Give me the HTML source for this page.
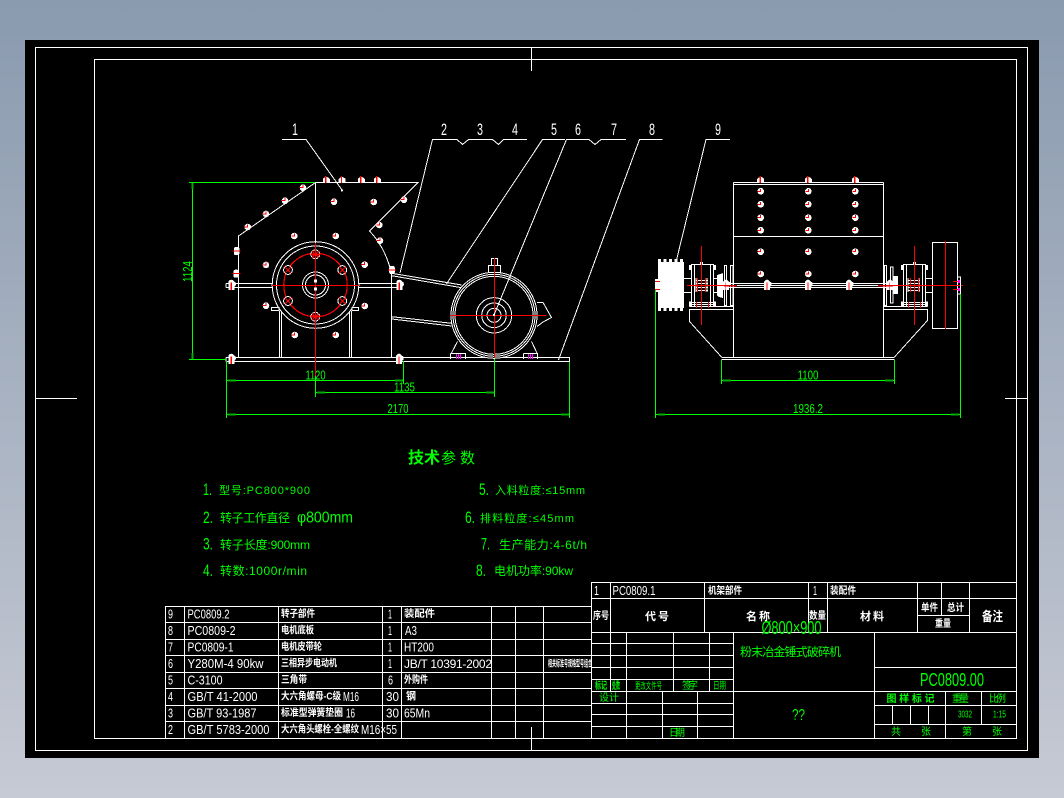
<!DOCTYPE html>
<html><head><meta charset="utf-8"><title>PC0809.00</title>
<style>
html,body{margin:0;padding:0;width:1064px;height:798px;overflow:hidden;background:linear-gradient(#8a9aaf,#c6cad4)}
svg{position:absolute;left:0;top:0;display:block}
.w{stroke:#fff;fill:none;stroke-width:1}
.r{stroke:#f00;fill:none;stroke-width:1}
.g{stroke:#0f0;fill:none;stroke-width:1}
.m{stroke:#f0f;fill:none;stroke-width:1}
g.cr *{shape-rendering:crispEdges}
text{font-family:"Liberation Sans","WenQuanYi Zen Hei","Noto Sans CJK SC",sans-serif}
.tw{fill:#fff;font-size:13px}
.tc{fill:#fff;font-size:10px;font-weight:700}
.tg{fill:#0f0;font-size:13px}
.cg{fill:#0f0;font-size:10px}
</style></head><body>
<svg width="1064" height="798" viewBox="0 0 1064 798" xmlns="http://www.w3.org/2000/svg">
<defs>
<g id="b"><circle r="3.3" fill="#fff"/><path d="M-3 0H0M0 -2.5V0.5" stroke="#f00" stroke-width="1"/></g>
<g id="tp"><path d="M-3.5 3V-1Q0 -5 3.5 -1V3Z" fill="#fff"/><path d="M-0.5 -4V3" stroke="#f00" stroke-width="1.2"/></g>
<g id="sd"><rect x="-2.8" y="-4" width="5.6" height="8" rx="2" fill="#fff"/><path d="M-4 0H4" stroke="#f00"/></g>
<g id="tl"><path d="M-3 5.5V-3Q0 -7 3 -3V5.5Z" fill="#fff"/><rect x="-0.5" y="-3" width="5" height="5" rx="2" fill="#fff"/><path d="M0 -2V5.5" stroke="#f00" stroke-width="1.4"/></g>
<g id="rg"><circle r="4.4" fill="#000" stroke="#fff"/><path d="M-3.5 -3.5L3.5 3.5M3.5 -3.5L-3.5 3.5" stroke="#f00"/></g>
</defs>
<rect x="25" y="40" width="1014" height="718" fill="#000"/>
<g class="cr">
<!-- frames -->
<rect x="35.5" y="47.5" width="992" height="703" class="w"/>
<rect x="94.5" y="59.5" width="922" height="679" class="w"/>
<path class="w" d="M531.5 47V71M36 398.5H77M1005 398.5H1028M531.5 727V750"/>

<!-- left view white -->
<path class="w" d="M238.5 357V236L315.5 182.5H418L369.5 231Q385 247 391.5 273V357M315.5 182.5V243"/>
<path class="w" d="M226 283.5H272M226 287.5H272M226 283.5V287.5M359 283.5H402M359 287.5H402"/>
<path class="w" d="M226 357.5H570M226 361.5H570M226 357.5V361.5M569.5 358V362"/>
<path class="w" d="M279.5 311V357M281.5 311V357M349.5 311V357M351.5 311V357M271.5 307.5H279V310.5H271.5ZM352 307.5H358.5V310.5H352Z"/>
<circle cx="315.5" cy="285" r="43.3" class="w"/><circle cx="315.5" cy="285" r="39" class="w"/>
<circle cx="315.5" cy="285" r="13" class="w"/><circle cx="315.5" cy="285" r="10" class="w"/>
<circle cx="315.5" cy="285" r="31.7" class="r" style="stroke-width:1.2"/>
<use href="#rg" x="288" y="270"/><use href="#rg" x="342.3" y="270"/><use href="#rg" x="288" y="301"/><use href="#rg" x="342.3" y="301"/>
<use href="#rg" x="315.3" y="254.3"/><use href="#rg" x="315.3" y="316.7"/>
<path class="r" d="M315.5 243V376M272 285.5H359"/>
<path d="M311 254.5H320M311 316.5H320" stroke="#f00" stroke-width="2"/>
<circle cx="315.5" cy="281" r="1.7" fill="#fff"/><circle cx="315.5" cy="289" r="1.7" fill="#fff"/>

<use href="#tp" x="326.3" y="180"/><use href="#tp" x="342" y="180"/><use href="#tp" x="361.3" y="180"/><use href="#tp" x="377.3" y="180"/>
<use href="#b" x="247.7" y="227"/><use href="#b" x="266" y="214"/><use href="#b" x="285" y="200.7"/><use href="#b" x="303" y="187.7"/>
<use href="#b" x="334" y="201.7"/><use href="#b" x="373.7" y="202"/><use href="#b" x="404" y="199.7"/><use href="#b" x="379.3" y="225"/><use href="#b" x="380" y="240.7"/>
<use href="#b" x="294.3" y="236"/><use href="#b" x="335.7" y="236"/><use href="#b" x="266" y="265"/><use href="#b" x="364.7" y="264.7"/><use href="#b" x="266" y="305.7"/><use href="#b" x="364.7" y="306"/><use href="#b" x="294.7" y="335"/><use href="#b" x="335.7" y="335"/>
<use href="#sd" x="236.7" y="251"/><use href="#sd" x="236.3" y="273.7"/><use href="#sd" x="392" y="270"/>
<use href="#tl" x="231.3" y="284.7"/><use href="#tl" x="399.3" y="284.7"/><use href="#tl" x="231.3" y="358.7"/><use href="#tl" x="399" y="358.7"/>

<!-- belts and motor -->
<path class="w" d="M391.7 273.3L461.7 285M391.7 275.7L461.7 287.7M391.7 316.7L451.7 323.3M391.7 319L451.7 326"/>
<circle cx="494" cy="315.3" r="43" fill="#000" stroke="#fff"/><circle cx="494" cy="315.3" r="41" class="w"/><circle cx="494" cy="315.3" r="39" class="w"/>
<circle cx="494" cy="315.3" r="17.7" class="w"/><circle cx="494" cy="315.3" r="12.3" class="w"/><circle cx="494" cy="315.3" r="7" class="w"/>
<path class="w" d="M488.5 272.5V265.5H500.5V272.5M491.5 265.5V258.5H497.5V265.5"/>
<path class="w" d="M537 302.5H543L551.5 317.5L543 322L537 326.5"/>
<path class="w" d="M450.5 353.5H465.5V359M450.5 353.5V359M523.5 353.5H537.5V359M523.5 353.5V359M451.5 353L457.5 341.5M537 353L531.5 341.5"/>
<path class="m" d="M456.5 354V359M458.5 354V359M460.5 354V359M528.5 354V359M530.5 354V359M532.5 354V359"/>
<path class="r" d="M494.5 258V358M450 315.5H546"/>
<rect x="493" y="314" width="2" height="2" fill="#fff"/>

<!-- leaders left -->
<path class="w" d="M282 139.5H306L342 190"/>
<circle cx="342" cy="190.5" r="1" fill="#fff"/>
<path class="w" d="M527 139.5H503.5L498.5 144.5L492.5 139.5H468.5L462.5 144.5L457 139.5H432.5L400 273"/>
<path class="w" d="M565 139.5H542.5L446.5 284"/>
<path class="w" d="M626 139.5H601L595 144.5L589 139.5H566.5L494 315"/>
<path class="w" d="M662.5 139.5H639.5L558.5 360"/>
<path class="w" d="M730 139.5H706L676.5 260"/>

<!-- right view -->
<path class="w" d="M733.5 182.5V357M883.5 182.5V357M733.5 182.5H883.5M733.5 184.5H883.5M733.5 236.5H883.5"/>
<path class="w" d="M721.5 357.5H894.5M721.5 359.5H894.5"/>
<path class="w" d="M727 283.5H890M727 285.5H890M727 287.5H890"/>
<path class="w" d="M689.5 306.5H733M689.5 309.5H733M689.5 309V321.5L721.5 357M927.5 306.5H884M927.5 309.5H884M927.5 309V320.5L894.5 357"/>
<g id="rb">
<use href="#b" x="760.7" y="191.3"/><use href="#b" x="808.3" y="191.3"/><use href="#b" x="855.3" y="191.3"/>
<use href="#b" x="760.7" y="204.3"/><use href="#b" x="808.3" y="204.3"/><use href="#b" x="855.3" y="204.3"/>
<use href="#b" x="760.7" y="217.7"/><use href="#b" x="808.3" y="217.7"/><use href="#b" x="855.3" y="217.7"/>
<use href="#b" x="760.7" y="230.3"/><use href="#b" x="808.3" y="230.3"/><use href="#b" x="855.3" y="230.3"/>
<use href="#b" x="760.7" y="251.7"/><use href="#b" x="808.3" y="251.7"/><use href="#b" x="855.3" y="251.7"/>
<use href="#b" x="760.7" y="274"/><use href="#b" x="808.3" y="274"/><use href="#b" x="855.3" y="274"/>
<use href="#tp" x="760.7" y="180"/><use href="#tp" x="808.3" y="180"/><use href="#tp" x="855.3" y="180"/>
<use href="#tl" x="767" y="284.7"/><use href="#tl" x="808" y="284.7"/><use href="#tl" x="849" y="284.7"/>
<use href="#tl" x="726" y="284.7"/><use href="#tl" x="890" y="284.7"/>
</g>
<!-- pulley -->
<rect x="658" y="262" width="26" height="46" fill="#fff"/>
<path d="M658 260.5H684M658 309.5H684" stroke="#fff" stroke-width="3" stroke-dasharray="3 2.5"/>
<path class="w" d="M684 278.5H692M684 292.5H692"/>
<path d="M655 279V292H658V279Z" fill="#fff"/>
<path class="r" d="M655 281.5H660M655 289.5H660"/>
<!-- left bearing -->
<path class="w" d="M691.5 264.5H713.5V306.5H691.5ZM694.5 264.5V306.5M710.5 264.5V306.5M691 302.5H713M691 304.5H713"/>
<path d="M689 265h3v5h-3zM689 301.5h3v5h-3zM713 265h3v5h-3zM713 301.5h3v5h-3zM700 262h3v2h-3z" fill="#fff"/>
<path class="w" d="M696 280.5H708M696 283.5H708M696 290.5H708M696 287.5H708M696 278V292M707 278V292"/>
<path class="r" d="M701.5 246V325M697.5 278V292M705.5 278V292M696.5 302V308M708.5 302V308"/>
<path d="M717 275Q723 273 723 273V298Q717 297 717 295Z" fill="#fff"/>
<path class="w" d="M724.5 265.5H726.5V305.5H724.5ZM730.5 265.5H733V305.5H730.5Z"/>
<path class="w" d="M717 278.5H714M717 292.5H714"/>
<path class="r" d="M687 285.5H736"/><path d="M724 285.5H737" stroke="#d00" stroke-width="1.5"/>
<!-- right bearing -->
<path class="w" d="M903.5 264.5H925.5V306.5H903.5ZM906.5 264.5V306.5M922.5 264.5V306.5M902 302.5H925M902 304.5H925"/>
<path d="M901 265h3v5h-3zM901 301.5h3v5h-3zM925 265h3v5h-3zM925 301.5h3v5h-3zM913 262h3v2h-3z" fill="#fff"/>
<path class="w" d="M908 280.5H920M908 283.5H920M908 290.5H920M908 287.5H920M908 278V292M919 278V292"/>
<path class="r" d="M914.5 246V325M910.5 278V292M918.5 278V292M908.5 302V308M920.5 302V308"/>
<path class="w" d="M884.5 265.5H886.5V305.5H884.5ZM890.5 267V303H893V267Z"/>
<path d="M893 276H898V294H893Z" fill="#fff"/>
<path class="w" d="M925 278.5H932M925 292.5H932"/>
<!-- flywheel -->
<rect x="932.5" y="242.5" width="25" height="86" class="w"/>
<path class="r" d="M945.5 241V329M880 285.5H963"/><path d="M878 285.5H893" stroke="#d00" stroke-width="1.5"/>
<path class="w" d="M958 277H960.5V294H958"/>
<path class="r" d="M953 281.5H959M953 289.5H959"/>
<path d="M958 280h2v3h-2zM958 288h2v3h-2z" fill="#f0f"/>

<!-- dimensions -->
<path class="g" d="M189 182.5H315M192.5 182.5V359M189 359.5H226M226.5 361V418M403.5 361V384M226.5 380.5H403.5M315.5 376V397M494.5 359V397M315.5 392.5H494M226.5 414.5H569.5M569.5 362V418"/>
<path class="g" d="M655.5 290V418M960.5 294V418M655.5 414.5H960.5M721.5 360V384M894.5 360V384M721.5 380.5H894.5"/>
<path d="M192.5 183V189M192.5 353V359M228 380.5H236M395 380.5H403M317 392.5H325M486 392.5H494M228 414.5H236M561 414.5H569M723 380.5H731M885 380.5H893M658 414.5H665M951 414.5H959" stroke="#0a0" stroke-width="2"/>

<!-- left table -->
<path class="w" d="M165.5 606.5H592M165.5 622.5H592M165.5 639.5H592M165.5 655.5H592M165.5 672.5H592M165.5 688.5H592M165.5 705.5H592M165.5 721.5H592M165.5 738.5H592"/>
<path class="w" d="M165.5 606V738M184.5 606V738M278.5 606V738M382.5 606V738M401.5 606V738M491.5 606V738M515.5 606V738M543.5 606V738"/>

<!-- right table -->
<path class="w" d="M591.5 582.5H1016M591.5 598.5H1016M591.5 632.5H1016M917.5 615.5H969.5M591.5 582V738M610.5 582V632M704.5 582V632M808.5 582V632M827.5 582V632M917.5 582V632M941.5 582V615M969.5 582V632"/>
<path class="w" d="M591 643.5H733.5M591 655.5H733.5M591 667.5H733.5M591 679.5H733.5M591 691.5H1016M591 703.5H733.5M591 714.5H733.5M591 726.5H733.5M733.5 632.5V738"/>
<path class="w" d="M610.5 632V691M626.5 632V738M673.5 632V691M709.5 632V691M662.5 691V738M697.5 691V738"/>
<path class="w" d="M874.5 632V738M874.5 667.5H1016M874.5 705.5H1016M874.5 724.5H1016M945.5 691V738M981.5 691V724M892.5 705V724M910.5 705V724M928.5 705V724"/>
</g>

<!-- callout numbers -->
<g fill="#fff" font-size="17">
<text x="292" y="135" textLength="6" lengthAdjust="spacingAndGlyphs">1</text><text x="441" y="135" textLength="6" lengthAdjust="spacingAndGlyphs">2</text><text x="477" y="135" textLength="6" lengthAdjust="spacingAndGlyphs">3</text><text x="512" y="135" textLength="6" lengthAdjust="spacingAndGlyphs">4</text><text x="551" y="135" textLength="6" lengthAdjust="spacingAndGlyphs">5</text><text x="575" y="135" textLength="6" lengthAdjust="spacingAndGlyphs">6</text><text x="611" y="135" textLength="6" lengthAdjust="spacingAndGlyphs">7</text><text x="649" y="135" textLength="6" lengthAdjust="spacingAndGlyphs">8</text><text x="715" y="135" textLength="6" lengthAdjust="spacingAndGlyphs">9</text>
</g>

<!-- dim labels -->
<g class="tg">
<text x="305.5" y="379.5" textLength="20" lengthAdjust="spacingAndGlyphs">1120</text>
<text x="394" y="391.5" textLength="21" lengthAdjust="spacingAndGlyphs">1135</text>
<text x="387.5" y="413" textLength="21" lengthAdjust="spacingAndGlyphs">2170</text>
<text x="797.5" y="379.5" textLength="21" lengthAdjust="spacingAndGlyphs">1100</text>
<text x="793" y="413" textLength="30" lengthAdjust="spacingAndGlyphs">1936.2</text>
<text transform="translate(192,282) rotate(-90)" textLength="21" lengthAdjust="spacingAndGlyphs" x="0" y="0">1124</text>
</g>

<!-- tech params -->
<text x="408" y="463" fill="#0f0" font-size="16" font-weight="700" textLength="32" lengthAdjust="spacing">技术</text>
<text x="441" y="463" fill="#0f0" font-size="15" textLength="34" lengthAdjust="spacing">参数</text>
<g fill="#0f0" font-size="17">
<text x="203" y="495" textLength="9" lengthAdjust="spacingAndGlyphs">1.</text><text x="203" y="523" textLength="10" lengthAdjust="spacingAndGlyphs">2.</text><text x="203" y="549.5" textLength="10" lengthAdjust="spacingAndGlyphs">3.</text><text x="203" y="576" textLength="10" lengthAdjust="spacingAndGlyphs">4.</text>
<text x="479" y="495" textLength="10" lengthAdjust="spacingAndGlyphs">5.</text><text x="465" y="523" textLength="10" lengthAdjust="spacingAndGlyphs">6.</text><text x="481" y="549.5" textLength="9" lengthAdjust="spacingAndGlyphs">7.</text><text x="476" y="576" textLength="10" lengthAdjust="spacingAndGlyphs">8.</text>
</g>
<g fill="#0f0" font-size="11">
<text x="219" y="494" textLength="91" lengthAdjust="spacing">型号:PC800*900</text>
<text x="220" y="522" font-size="12" textLength="70" lengthAdjust="spacing">转子工作直径</text>
<text x="297" y="522.5" font-size="16" textLength="56" lengthAdjust="spacingAndGlyphs">φ800mm</text>
<text x="220" y="549" font-size="12" textLength="90" lengthAdjust="spacing">转子长度:900mm</text>
<text x="220" y="575" font-size="12" textLength="87" lengthAdjust="spacing">转数:1000r/min</text>
<text x="495" y="494" textLength="90" lengthAdjust="spacing">入料粒度:≤15mm</text>
<text x="480" y="522" textLength="94" lengthAdjust="spacing">排料粒度:≤45mm</text>
<text x="499" y="549" font-size="12" textLength="88" lengthAdjust="spacing">生产能力:4-6t/h</text>
<text x="494" y="575" font-size="12" textLength="79" lengthAdjust="spacing">电机功率:90kw</text>
</g>

<!-- left table text -->
<g class="tw">
<text x="168" y="618.5" textLength="5" lengthAdjust="spacingAndGlyphs">9</text><text x="168" y="635" textLength="5" lengthAdjust="spacingAndGlyphs">8</text><text x="168" y="651.5" textLength="5" lengthAdjust="spacingAndGlyphs">7</text><text x="168" y="668" textLength="5" lengthAdjust="spacingAndGlyphs">6</text><text x="168" y="684.5" textLength="5" lengthAdjust="spacingAndGlyphs">5</text><text x="168" y="701" textLength="5" lengthAdjust="spacingAndGlyphs">4</text><text x="168" y="717.5" textLength="5" lengthAdjust="spacingAndGlyphs">3</text><text x="168" y="734" textLength="5" lengthAdjust="spacingAndGlyphs">2</text>
<text x="187.5" y="618.5" textLength="42" lengthAdjust="spacingAndGlyphs">PC0809.2</text>
<text x="187.5" y="635" textLength="48" lengthAdjust="spacingAndGlyphs">PC0809-2</text>
<text x="187.5" y="651.5" textLength="46" lengthAdjust="spacingAndGlyphs">PC0809-1</text>
<text x="187.5" y="668" textLength="76" lengthAdjust="spacingAndGlyphs">Y280M-4   90kw</text>
<text x="187.5" y="684.5" textLength="35" lengthAdjust="spacingAndGlyphs">C-3100</text>
<text x="187.5" y="701" textLength="70" lengthAdjust="spacingAndGlyphs">GB/T 41-2000</text>
<text x="187.5" y="717.5" textLength="69" lengthAdjust="spacingAndGlyphs">GB/T 93-1987</text>
<text x="187.5" y="734" textLength="82" lengthAdjust="spacingAndGlyphs">GB/T 5783-2000</text>
<text x="388" y="618.5" textLength="4" lengthAdjust="spacingAndGlyphs">1</text><text x="388" y="635" textLength="4" lengthAdjust="spacingAndGlyphs">1</text><text x="388" y="651.5" textLength="4" lengthAdjust="spacingAndGlyphs">1</text><text x="388" y="668" textLength="4" lengthAdjust="spacingAndGlyphs">1</text><text x="388" y="684.5" textLength="5" lengthAdjust="spacingAndGlyphs">6</text>
<text x="386" y="701" textLength="13" lengthAdjust="spacingAndGlyphs">30</text><text x="386" y="717.5" textLength="13" lengthAdjust="spacingAndGlyphs">30</text>
<text x="405" y="635" textLength="12" lengthAdjust="spacingAndGlyphs">A3</text>
<text x="404" y="651.5" textLength="30" lengthAdjust="spacingAndGlyphs">HT200</text>
<text x="404" y="717.5" textLength="26" lengthAdjust="spacingAndGlyphs">65Mn</text>
<text x="343" y="701" textLength="16" lengthAdjust="spacingAndGlyphs">M16</text>
<text x="346" y="717.5" textLength="9" lengthAdjust="spacingAndGlyphs">16</text>
<text x="361" y="734" textLength="36" lengthAdjust="spacingAndGlyphs">M16×55</text>
<text x="404" y="668" font-size="12" textLength="88" lengthAdjust="spacing">JB/T 10391-2002</text>
</g>
<g class="tc">
<text x="281" y="617" textLength="34" lengthAdjust="spacingAndGlyphs">转子部件</text>
<text x="281" y="633.5" textLength="33" lengthAdjust="spacingAndGlyphs">电机底板</text>
<text x="281" y="650" textLength="41" lengthAdjust="spacingAndGlyphs">电机皮带轮</text>
<text x="281" y="666.5" textLength="56" lengthAdjust="spacingAndGlyphs">三相异步电动机</text>
<text x="281" y="683" textLength="26" lengthAdjust="spacingAndGlyphs">三角带</text>
<text x="281" y="699.5" textLength="60" lengthAdjust="spacingAndGlyphs">大六角螺母-C级</text>
<text x="281" y="716" textLength="62" lengthAdjust="spacingAndGlyphs">标准型弹簧垫圈</text>
<text x="281" y="732.5" textLength="78" lengthAdjust="spacingAndGlyphs">大六角头螺栓-全螺纹</text>
<text x="404" y="617" textLength="31" lengthAdjust="spacingAndGlyphs">装配件</text>
<text x="404" y="683" textLength="24" lengthAdjust="spacingAndGlyphs">外购件</text>
<text x="406" y="699.5">钢</text>
<text x="548" y="666.5" font-size="9" textLength="44" lengthAdjust="spacingAndGlyphs">相关标准号规格型号组合</text>
</g>

<!-- right table text -->
<g class="tw">
<text x="594" y="595" textLength="5" lengthAdjust="spacingAndGlyphs">1</text>
<text x="612.5" y="595" textLength="43" lengthAdjust="spacingAndGlyphs">PC0809.1</text>
<text x="813" y="595" textLength="4" lengthAdjust="spacingAndGlyphs">1</text>
</g>
<g class="tc">
<text x="708" y="594" textLength="34" lengthAdjust="spacingAndGlyphs">机架部件</text>
<text x="830" y="594" textLength="26" lengthAdjust="spacingAndGlyphs">装配件</text>
<text x="593" y="619" textLength="16" lengthAdjust="spacingAndGlyphs">序号</text>
<text x="645" y="620" font-size="11" textLength="24" lengthAdjust="spacing">代号</text>
<text x="746" y="620" font-size="11" textLength="24" lengthAdjust="spacing">名称</text>
<text x="809" y="619" textLength="17" lengthAdjust="spacingAndGlyphs">数量</text>
<text x="860" y="620" font-size="11" textLength="24" lengthAdjust="spacing">材料</text>
<text x="921" y="611" textLength="17" lengthAdjust="spacingAndGlyphs">单件</text>
<text x="947" y="611" textLength="17" lengthAdjust="spacingAndGlyphs">总计</text>
<text x="935" y="627" textLength="16" lengthAdjust="spacingAndGlyphs">重量</text>
<text x="982" y="621" font-size="13" textLength="21" lengthAdjust="spacingAndGlyphs">备注</text>
</g>
<g class="cg">
<text x="761.5" y="634" font-size="18" textLength="60" lengthAdjust="spacingAndGlyphs">Ø800×900</text>
<text x="740" y="656" font-size="12" textLength="101" lengthAdjust="spacing">粉末冶金锤式破碎机</text>
<text x="920" y="686" font-size="18" textLength="64" lengthAdjust="spacingAndGlyphs">PC0809.00</text>
<text x="792" y="720" font-size="16" textLength="13" lengthAdjust="spacingAndGlyphs">??</text>
<text x="886.5" y="702" font-weight="700" textLength="48" lengthAdjust="spacing">图样标记</text>
<text x="952" y="702" textLength="17" lengthAdjust="spacing">重量</text>
<text x="989" y="702" textLength="17" lengthAdjust="spacing">比例</text>
<text x="958" y="717.5" font-size="10" textLength="14" lengthAdjust="spacingAndGlyphs">3032</text>
<text x="993" y="717.5" font-size="10" textLength="13" lengthAdjust="spacingAndGlyphs">1:15</text>
<text x="891" y="735" textLength="40" lengthAdjust="spacing">共张</text>
<text x="962" y="735" textLength="40" lengthAdjust="spacing">第张</text>
<text x="595" y="689" font-weight="700" textLength="12" lengthAdjust="spacingAndGlyphs">标记</text>
<text x="612" y="689" font-weight="700" textLength="8" lengthAdjust="spacingAndGlyphs">处数</text>
<text x="635" y="689" font-size="9" textLength="27" lengthAdjust="spacingAndGlyphs">更改文件号</text>
<text x="682" y="689" textLength="16" lengthAdjust="spacing">签字</text>
<text x="713" y="689" textLength="13" lengthAdjust="spacingAndGlyphs">日期</text>
<text x="599" y="701" textLength="20" lengthAdjust="spacing">设计</text>
<text x="669" y="736" textLength="16" lengthAdjust="spacing">日期</text>
</g>
</svg>
</body></html>
